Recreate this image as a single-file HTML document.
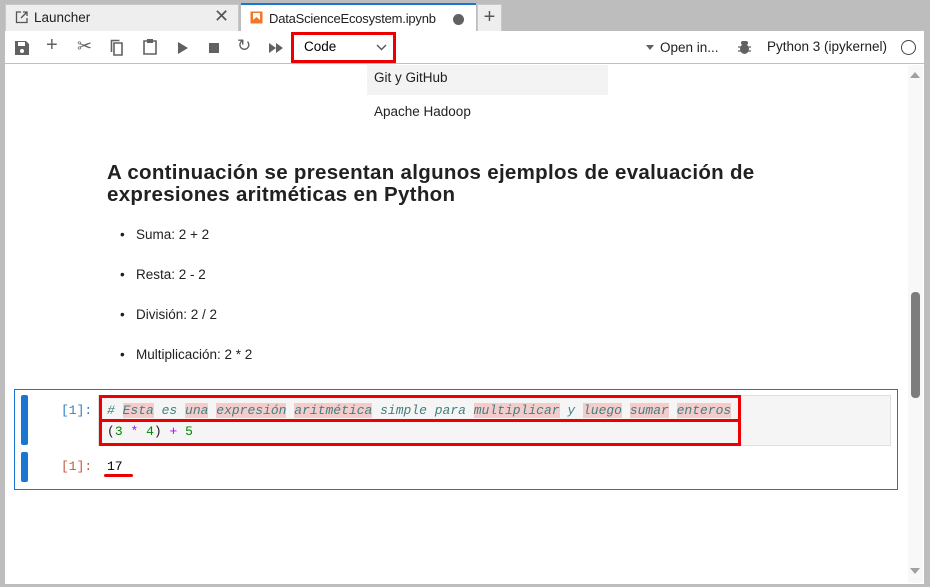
<!DOCTYPE html>
<html><head><meta charset="utf-8"><style>
*{box-sizing:border-box;margin:0;padding:0}
body{width:930px;height:587px;background:#bdbdbd;font-family:"Liberation Sans",sans-serif;position:relative;overflow:hidden;color:#212121}
.abs{position:absolute}
.tab1{left:5px;top:4px;width:234px;height:27px;background:#eeeeee;border:1px solid #c8c8c8;border-bottom:none}
.tab2{left:241px;top:3px;width:235px;height:29px;background:#fff;border-top:2px solid #1976d2}
.tab3{left:477px;top:4px;width:25px;height:27px;background:#eeeeee;border:1px solid #c8c8c8;border-bottom:none;text-align:center;font-size:20px;line-height:24px;color:#555}
.main{left:5px;top:31px;width:919px;height:553px;background:#fff}
.tb{left:5px;top:31px;width:919px;height:33px;border-bottom:1px solid #c0c0c0;background:#fff}
.t{font-size:13.5px}
.mono{font-family:"Liberation Mono",monospace;font-size:13px}
</style></head><body>
<div class="abs tab1"><svg class="abs" style="left:9px;top:6px" width="13" height="13" viewBox="0 0 13 13"><path d="M6 1H1.5v10.5H12V7M8 1h4v4M12 1L6 7" stroke="#555" stroke-width="1.3" fill="none"/></svg>
<span class="abs t" style="left:28px;top:5px">Launcher</span>
<span class="abs" style="left:208px;top:1px;font-size:18px;color:#555">✕</span></div>
<div class="abs tab2"><svg class="abs" style="left:9px;top:6px" width="13" height="13"><rect x="0.5" y="0.5" width="12" height="12" fill="#f37726"/><rect x="3" y="2" width="7" height="7" fill="#fff"/><path d="M3 9l3.5-3 3.5 3z" fill="#f37726"/></svg>
<span class="abs" style="left:28px;top:6px;font-size:13px;letter-spacing:-0.2px">DataScienceEcosystem.ipynb</span>
<span class="abs" style="left:212px;top:9px;width:11px;height:11px;border-radius:50%;background:#616161"></span></div>
<div class="abs tab3">+</div>
<div class="abs main"></div>
<div class="abs tb">
<svg class="abs" style="left:9px;top:9px" width="16" height="16"><path d="M1 1h11l3 3v11H1z" fill="#616161"/><rect x="4" y="2" width="7" height="4" fill="#fff"/><circle cx="8" cy="11" r="2" fill="#fff"/></svg>
<span class="abs" style="left:41px;top:3px;font-size:20px;color:#616161">+</span>
<span class="abs" style="left:72px;top:5px;font-size:18px;color:#616161">✂</span>
<svg class="abs" style="left:105px;top:8px" width="16" height="17"><path d="M4 4h8v12H4z M1.5 13V1.5h8" stroke="#616161" stroke-width="1.6" fill="none"/></svg>
<svg class="abs" style="left:137px;top:7px" width="16" height="17"><path d="M2 3h12v13H2z" stroke="#616161" stroke-width="1.6" fill="none"/><rect x="5" y="1" width="6" height="4" fill="#616161"/></svg>
<svg class="abs" style="left:173px;top:11px" width="10" height="12"><path d="M0 0l10 6-10 6z" fill="#616161"/></svg>
<div class="abs" style="left:204px;top:12px;width:10px;height:10px;background:#616161"></div>
<span class="abs" style="left:232px;top:5px;font-size:17px;color:#616161">↻</span>
<svg class="abs" style="left:264px;top:12px" width="15" height="10"><path d="M0 0l7 5-7 5zM7 0l7 5-7 5z" fill="#616161"/></svg>
<div class="abs" style="left:286px;top:1px;width:105px;height:31px;border:3px solid #e00"></div>
<span class="abs t" style="left:299px;top:8px;color:#000">Code</span>
<svg class="abs" style="left:371px;top:13px" width="11" height="7"><path d="M1 1l4.5 4.5L10 1" stroke="#555" stroke-width="1.4" fill="none"/></svg>
<svg class="abs" style="left:641px;top:14px" width="8" height="5"><path d="M0 0h8L4 5z" fill="#616161"/></svg>
<span class="abs t" style="left:655px;top:9px">Open in...</span>
<svg class="abs" style="left:733px;top:9px" width="13" height="15"><ellipse cx="6.5" cy="9" rx="4.5" ry="5" fill="#616161"/><rect x="3" y="1" width="7" height="4" rx="2" fill="#616161"/><path d="M0 7h13M0 11h13" stroke="#616161" stroke-width="1.3"/></svg>
<span class="abs t" style="left:762px;top:8px">Python 3 (ipykernel)</span>
<div class="abs" style="left:896px;top:9px;width:15px;height:15px;border:1.5px solid #444;border-radius:50%"></div>
</div>
<div class="abs" style="left:908px;top:65px;width:15px;height:518px;background:#f8f8f8"></div>
<svg class="abs" style="left:910px;top:72px" width="10" height="6"><path d="M0 6h10L5 0z" fill="#a0a0a0"/></svg>
<svg class="abs" style="left:910px;top:568px" width="10" height="6"><path d="M0 0h10L5 6z" fill="#a0a0a0"/></svg>
<div class="abs" style="left:911px;top:292px;width:9px;height:106px;background:#7d7d7d;border-radius:4px"></div>
<div class="abs" style="left:367px;top:65px;width:241px;height:30px;background:#f3f3f3"></div>
<span class="abs t" style="left:374px;top:70px">Git y GitHub</span>
<span class="abs t" style="left:374px;top:104px">Apache Hadoop</span>
<div class="abs" style="left:107px;top:162px;font-size:20.5px;font-weight:bold;line-height:22px;color:#212121;letter-spacing:0.3px">A continuación se presentan algunos ejemplos de evaluación de<br>expresiones aritméticas en Python</div>
<div class="abs t" style="left:120px;top:215px;line-height:40px">
<div>•&nbsp;&nbsp;&nbsp;Suma: 2 + 2</div><div>•&nbsp;&nbsp;&nbsp;Resta: 2 - 2</div><div>•&nbsp;&nbsp;&nbsp;División: 2 / 2</div><div>•&nbsp;&nbsp;&nbsp;Multiplicación: 2 * 2</div></div>
<div class="abs" style="left:14px;top:389px;width:884px;height:101px;border:1px solid #1976d2"></div>
<div class="abs" style="left:21px;top:395px;width:7px;height:50px;background:#1976d2;border-radius:2px"></div>
<div class="abs" style="left:21px;top:452px;width:7px;height:30px;background:#1976d2;border-radius:2px"></div>
<div class="abs" style="left:98px;top:395px;width:793px;height:51px;background:#f5f5f5;border:1px solid #e0e0e0"></div>
<span class="abs mono" style="left:61px;top:403px;color:#307fc1">[1]:</span>
<span class="abs mono" style="left:61px;top:459px;color:#bf5b3d">[1]:</span>
<span class="abs mono" style="left:107px;top:403px;color:#408080;font-style:italic">#&nbsp;<span style="background:#f4cccc">Esta</span> es <span style="background:#f4cccc">una</span> <span style="background:#f4cccc">expresión</span> <span style="background:#f4cccc">aritmética</span> simple para <span style="background:#f4cccc">multiplicar</span> y <span style="background:#f4cccc">luego</span> <span style="background:#f4cccc">sumar</span> <span style="background:#f4cccc">enteros</span></span>
<span class="abs mono" style="left:107px;top:424px">(<span style="color:#080">3</span> <span style="color:#a0f">*</span> <span style="color:#080">4</span>) <span style="color:#a0f">+</span> <span style="color:#080">5</span></span>
<div class="abs" style="left:99px;top:395px;width:642px;height:27px;border:3px solid #e00"></div>
<div class="abs" style="left:99px;top:419px;width:642px;height:27px;border:3px solid #e00"></div>
<span class="abs mono" style="left:107px;top:459px;color:#000">17</span>
<div class="abs" style="left:104px;top:474px;width:29px;height:3px;background:#e00;border-radius:2px"></div>
</body></html>
